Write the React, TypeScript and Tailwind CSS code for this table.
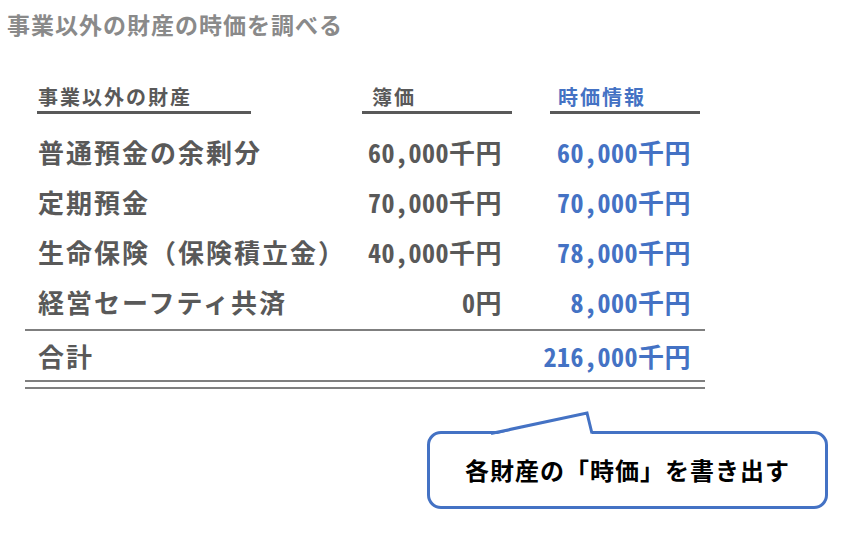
import React from "react";

interface Row {
    label: string;
    book: string;
    market: string;
}

const rows: Row[] = [
    {label: "普通預金の余剰分", book: "60,000千円", market: "60,000千円"},
    {label: "定期預金", book: "70,000千円", market: "70,000千円"},
    {label: "生命保険（保険積立金）", book: "40,000千円", market: "78,000千円"},
    {label: "経営セーフティ共済", book: "0円", market: "8,000千円"},
];

const numCls = "text-right [font-feature-settings:'hwid'] tracking-[0.5px]";

const App = () => {
    return (
        <div className="w-[844px] h-[533px] bg-white overflow-hidden font-['Noto_Sans_CJK_JP',sans-serif] font-bold">
            <div className="h-[48px] flex items-center pl-[7px] text-[23px] tracking-[1px] text-[#8a8a8a]">
                事業以外の財産の時価を調べる
            </div>

            <div className="ml-[25px] w-[680px] mt-[36px] text-[#595959]">
                {/* header */}
                <div className="flex items-end text-[20px] tracking-[2px] leading-[26px]">
                    <div className="ml-[12px] w-[214px] pl-[1px] pb-[1px] border-b-[3px] border-[#595959]">
                        事業以外の財産
                    </div>
                    <div className="ml-[111px] w-[150px] pl-[10px] pb-[1px] border-b-[3px] border-[#595959]">
                        簿価
                    </div>
                    <div className="ml-[38px] w-[150px] pl-[8px] pb-[1px] border-b-[3px] border-[#595959] text-[#4472c4]">
                        時価情報
                    </div>
                </div>

                {/* body */}
                <div className="mt-[12px] text-[26px]">
                    {rows.map((row) => (
                        <div key={row.label} className="h-[50px] flex items-center pl-[13px] pr-[14px]">
                            <div className="flex-1 tracking-[2px]">{row.label}</div>
                            <div className={`w-[150px] ${numCls}`}>{row.book}</div>
                            <div className={`w-[189px] text-[#4472c4] ${numCls}`}>{row.market}</div>
                        </div>
                    ))}
                    <div className="mt-[3px] h-[2px] bg-[#7f7f7f]"/>
                    <div className="h-[49px] flex items-center pl-[13px] pr-[14px]">
                        <div className="flex-1 tracking-[2px]">合計</div>
                        <div className={`text-[#4472c4] ${numCls}`}>216,000千円</div>
                    </div>
                    <div className="h-[2px] bg-[#7f7f7f]"/>
                    <div className="mt-[5px] h-[2px] bg-[#7f7f7f]"/>
                </div>
            </div>

            {/* callout */}
            <div className="relative ml-[427px] mt-[42px] w-[401px] h-[78px] border-[3px] border-[#4472c4] rounded-[14px] flex items-center justify-center text-[24px] tracking-[1px] text-black">
                <svg className="absolute left-[-3px] top-[-29px]" width="200" height="34" viewBox="0 0 200 34">
                    <polygon points="66,30 160,8 165,30" fill="#ffffff"/>
                    <polyline points="64,28.5 160,8 165,28.5" fill="none" stroke="#4472c4" strokeWidth="3"
                              strokeLinejoin="miter"/>
                </svg>
                各財産の「時価」を書き出す
            </div>
        </div>
    );
};

export default App;
